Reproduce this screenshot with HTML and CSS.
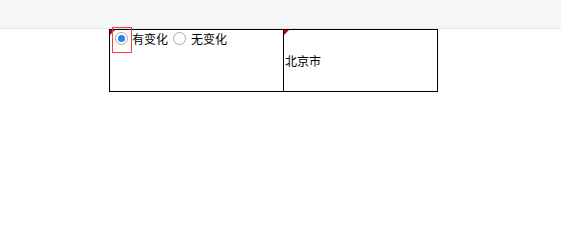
FILE: index.html
```html
<!DOCTYPE html>
<html lang="zh">
<head>
<meta charset="utf-8">
<link rel="stylesheet" href="styles.css">
</head>
<body>
<div class="topbar"></div>
<div class="sheet">
  <div class="cell cell-a">
    <div class="radios">
      <span class="radio-wrap focused"><span class="radio checked"></span></span>
      <span class="label">有变化</span>
      <span class="radio-wrap"><span class="radio"></span></span>
      <span class="label">无变化</span>
    </div>
  </div>
  <div class="cell cell-b">
    <span class="value">北京市</span>
  </div>
</div>
</body>
</html>
```
FILE: styles.css
```css
html, body {
  margin: 0;
  padding: 0;
  background: #ffffff;
  font-family: "Noto Sans CJK SC", "Noto Sans", sans-serif;
  font-size: 12px;
  color: #000;
}
.topbar {
  height: 28px;
  background: #f5f6f8;
  border-bottom: 1px solid #e4e6ea;
}
.sheet {
  display: flex;
  margin-left: 109px;
  width: 327px;
  height: 61px;
  border: 1px solid #000;
}
.cell {
  position: relative;
  box-sizing: border-box;
  height: 61px;
}
.cell::before {
  content: "";
  position: absolute;
  left: 0;
  top: 0;
  border-top: 5px solid #c00000;
  border-right: 5px solid transparent;
}
.cell-a {
  width: 174px;
  border-right: 1px solid #000;
}
.cell-b {
  flex: 1;
  display: flex;
  align-items: center;
  padding-left: 1px;
}
.radios {
  display: flex;
  align-items: center;
  height: 17px;
}
.radio-wrap {
  position: relative;
  display: inline-flex;
  margin-left: 5px;
  margin-right: 4px;
}
.radio-wrap + .label + .radio-wrap {
  margin-right: 5px;
}
.radio-wrap.focused::after {
  content: "";
  position: absolute;
  left: -3px;
  top: -5px;
  width: 18px;
  height: 24px;
  border: 1px solid #ff3a3a;
}
.radio {
  box-sizing: border-box;
  width: 13px;
  height: 13px;
  border: 1px solid #a8a8a8;
  border-radius: 50%;
  background: #fff;
  display: flex;
  align-items: center;
  justify-content: center;
}
.radio.checked::after {
  content: "";
  width: 7px;
  height: 7px;
  border-radius: 50%;
  background: #2f80ed;
}
.label {
  line-height: 17px;
}
.value {
  line-height: 17px;
}
```
